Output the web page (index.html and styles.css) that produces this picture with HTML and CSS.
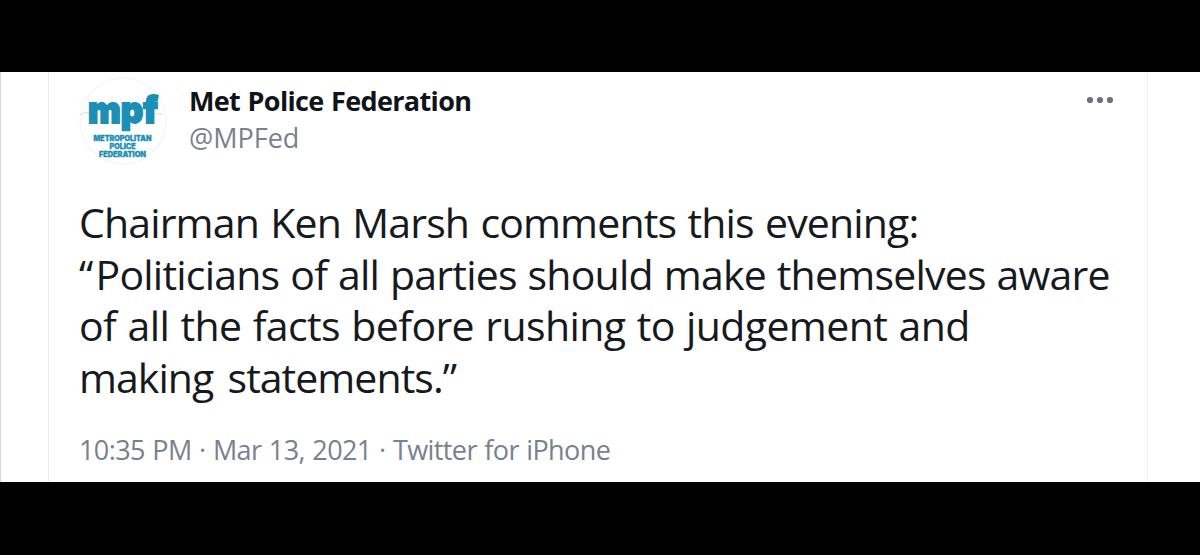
FILE: index.html
```html
<!DOCTYPE html>
<html lang="en">
<head>
    <meta charset="utf-8">
    <title>Met Police Federation on Twitter</title>
    <link rel="stylesheet" href="styles.css">
</head>
<body>
    <div class="page">
        <div class="tweet">
            <div class="header">
                <svg class="avatar" viewBox="0 0 88 88">
                    <circle cx="44" cy="44" r="43" fill="#fff" stroke="#f5f6f7" stroke-width="1.5"/>
                    <path d="M1 38l6-3 7 4M70 37h14" fill="none" stroke="#cbdde4" stroke-width="1"/>
                    <g class="logo">
                        <text class="mpf" x="9" y="46" textLength="70" lengthAdjust="spacingAndGlyphs">mpf</text>
                        <text class="small" x="14.5" y="64" textLength="58" lengthAdjust="spacingAndGlyphs">METROPOLITAN</text>
                        <text class="small" x="30.5" y="71.5" textLength="26" lengthAdjust="spacingAndGlyphs">POLICE</text>
                        <text class="small" x="20" y="79.5" textLength="47" lengthAdjust="spacingAndGlyphs">FEDERATION</text>
                    </g>
                </svg>
                <div class="user">
                    <div class="name">Met Police Federation</div>
                    <div class="handle">@MPFed</div>
                </div>
                <svg class="more" viewBox="0 0 28 8">
                    <circle cx="4" cy="4" r="3.1"/>
                    <circle cx="14" cy="4" r="3.1"/>
                    <circle cx="24" cy="4" r="3.1"/>
                </svg>
            </div>
            <div class="text">
                <div class="line line-1">Chairman Ken Marsh comments this evening:</div>
                <div class="line line-2"><span class="quote">“</span>Politicians of all parties should make themselves aware</div>
                <div class="line line-3">of all the facts before rushing to judgement and</div>
                <div class="line line-4">making statements.”</div>
            </div>
            <div class="meta">10:35 PM · Mar 13, 2021 · Twitter for iPhone</div>
        </div>
    </div>
</body>
</html>
```
FILE: styles.css
```css
body { margin: 0; padding: 72px 0 73px; background: #000; font-family: "Open Sans", "Noto Sans", sans-serif; }
.page { height: 410px; box-sizing: border-box; background: #fff; border-left: 1px solid #d8d8d8; padding-left: 47px; overflow: hidden; }
.tweet { width: 1100px; height: 410px; box-sizing: border-box; border-left: 1px solid #eceef0; border-right: 1px solid #eceef0; padding: 5px 33px 0 30px; }
.header { display: flex; height: 92px; }
.avatar { width: 88px; height: 88px; display: block; }
.logo { fill: #1b8fb5; stroke: #1b8fb5; font-family: Inter, sans-serif; font-weight: 900; }
.mpf { font-size: 37px; stroke-width: 1.8; }
.small { font-size: 7px; stroke-width: 0.3; }
.user { flex: 1; padding: 6px 0 0 22px; white-space: nowrap; }
.name { font-size: 27px; font-weight: 700; line-height: 36px; letter-spacing: -0.65px; word-spacing: 1px; color: #0f1419; }
.handle { padding-top: 1px; font-size: 27px; line-height: 36px; color: #77828c; }
.more { width: 28px; height: 8px; margin-top: 19px; fill: #69747e; }
.text { padding-top: 28px; color: #16191d; font-size: 41px; white-space: nowrap; }
.line { height: 51.5px; line-height: 51.5px; }
.line-1 { letter-spacing: -0.85px; word-spacing: 1.5px; }
.line-2 { letter-spacing: -0.78px; word-spacing: 1px; }
.line-3 { letter-spacing: -0.6px; word-spacing: 1.2px; }
.line-4 { letter-spacing: -0.95px; word-spacing: 4.5px; }
.quote { margin-right: 3px; }
.meta { padding-top: 29px; font-size: 27px; line-height: 36px; letter-spacing: -0.6px; word-spacing: 1px; color: #77828c; white-space: nowrap; }
```
